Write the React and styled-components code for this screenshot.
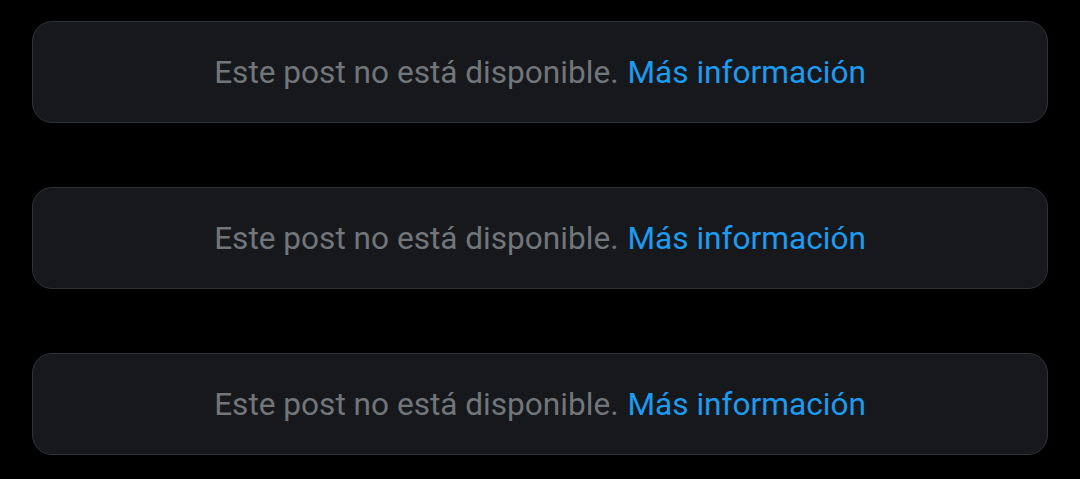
import React from "react";
import styled, { createGlobalStyle } from "styled-components";

const GlobalStyle = createGlobalStyle`
  html, body {
    margin: 0;
    padding: 0;
    background: #000000;
  }
  body {
    font-family: Roboto, "Noto Sans", "Liberation Sans", sans-serif;
  }
`;

const Page = styled.div`
  width: 1080px;
  height: 479px;
  box-sizing: border-box;
  padding: 21px 32px 0 32px;
  display: flex;
  flex-direction: column;
  gap: 64px;
`;

// unavailable post placeholder
const Notice = styled.div`
  height: 102px;
  box-sizing: border-box;
  background: #16181c;
  border: 1px solid #2f3336;
  border-radius: 20px;
  display: flex;
  align-items: center;
  justify-content: center;
  padding-top: 1px;
  font-size: 31.6px;
  color: #71767b;
`;

const Link = styled.a`
  color: #1d9bf0;
  text-decoration: none;
  margin-left: 9px;
`;

const NoticeCard = () => (
  <Notice>
    <span>Este post no está disponible.</span>
    <Link href="#">Más información</Link>
  </Notice>
);

export default function App() {
  return (
    <>
      <GlobalStyle />
      <Page>
        <NoticeCard />
        <NoticeCard />
        <NoticeCard />
      </Page>
    </>
  );
}
